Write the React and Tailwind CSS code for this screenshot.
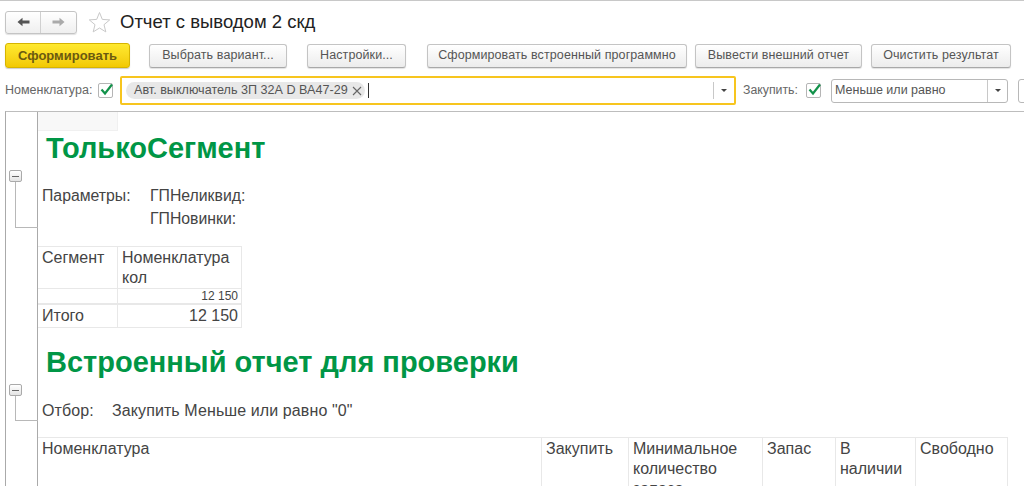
import React from "react";

function Btn({ w, ml, children }) {
  return (
    <button
      style={{ width: w, marginLeft: ml }}
      className="h-[24px] shrink-0 rounded-[3px] border border-[#c4c4c4] border-b-[#a8a8a8] bg-gradient-to-b from-white to-[#ececec] text-[12.5px] text-[#555] tracking-[0.1px] shadow-[0_1px_1px_rgba(0,0,0,0.12)] whitespace-nowrap"
    >
      {children}
    </button>
  );
}

function Check() {
  return (
    <span className="flex h-[15px] w-[15px] shrink-0 items-center justify-center rounded-[2px] border border-[#b5b5b5] bg-white">
      <svg width="15" height="15" viewBox="0 0 15 15" className="-mt-[3px] ml-[1px] overflow-visible">
        <path d="M2.5 7.5 L6 11.5 L13 2.5" fill="none" stroke="#12924a" strokeWidth="2.2" />
      </svg>
    </span>
  );
}

function Caret() {
  return <span className="h-0 w-0 border-x-[3px] border-t-[3px] border-x-transparent border-t-[#444]" />;
}

function Tree({ mt, h }) {
  return (
    <div style={{ marginTop: mt }} className="ml-[3px] flex flex-col">
      <div className="flex h-[12px] w-[13px] items-center justify-center rounded-[2px] border border-[#aaa] bg-gradient-to-b from-white to-[#e4e4e4]">
        <div className="h-px w-[7px] bg-[#666]" />
      </div>
      <div style={{ height: h }} className="ml-[6px] w-[23px] border-b border-l border-[#b8b8b8]" />
    </div>
  );
}

export default function App() {
  return (
    <div className="flex h-[486px] w-[1024px] flex-col overflow-hidden bg-white font-['Liberation_Sans',Arial,sans-serif] text-[#444]">
      <div className="h-px w-full bg-[#c8c8c8]" />
      {/* title */}
      <div className="flex h-[33px] items-center pl-[5px] pt-[9px]">
        <div className="flex h-[23px] w-[72px] items-center rounded-[3px] border border-[#c4c4c4] bg-gradient-to-b from-white to-[#efefef] shadow-[0_1px_1px_rgba(0,0,0,0.12)]">
          <div className="flex h-full w-[35px] items-center justify-center border-r border-[#d0d0d0]">
            <svg width="13" height="10" viewBox="0 0 13 10"><path d="M0.5 5 L5.5 0.8 V3.6 H12.5 V6.4 H5.5 V9.2 Z" fill="#555" /></svg>
          </div>
          <div className="flex h-full flex-1 items-center justify-center">
            <svg width="13" height="10" viewBox="0 0 13 10"><path d="M12.5 5 L7.5 0.8 V3.6 H0.5 V6.4 H7.5 V9.2 Z" fill="#aaa" /></svg>
          </div>
        </div>
        <svg width="23" height="22" viewBox="0 0 23 22" className="ml-[11px]">
          <path d="M11.5 1.5 L14.3 8.4 L21.7 8.9 L16 13.7 L17.8 20.9 L11.5 17 L5.2 20.9 L7 13.7 L1.3 8.9 L8.7 8.4 Z" fill="#fff" stroke="#c9c9c9" strokeWidth="1" />
        </svg>
        <span className="ml-[9px] text-[18.5px] text-[#222] whitespace-nowrap">Отчет с выводом 2 скд</span>
      </div>
      {/* buttons */}
      <div className="mt-[9px] flex items-center pl-[5px]">
        <button className="h-[25px] w-[125px] shrink-0 rounded-[3px] border border-[#d6b400] bg-gradient-to-b from-[#ffe92e] to-[#f2c900] text-[13px] font-bold text-[#6b5a10] shadow-[0_1px_1px_rgba(0,0,0,0.2)]">
          Сформировать
        </button>
        <Btn w={138} ml={19}>Выбрать вариант...</Btn>
        <Btn w={99} ml={20}>Настройки...</Btn>
        <Btn w={260} ml={21}>Сформировать встроенный программно</Btn>
        <Btn w={167} ml={8}>Вывести внешний отчет</Btn>
        <Btn w={140} ml={9}>Очистить результат</Btn>
      </div>
      {/* filters */}
      <div className="mt-[8px] flex items-center pl-[5px]">
        <span className="w-[93px] shrink-0 text-[12.5px] text-[#666]">Номенклатура:</span>
        <Check />
        <div className="ml-[7px] flex h-[29px] w-[616px] shrink-0 items-center rounded-[2px] border-2 border-[#f7c51e] pl-[4px]">
          <span className="flex h-[17px] items-center rounded-full bg-[#e8e8e8] pl-[8px] pr-[3px] text-[12.6px] text-[#555] whitespace-nowrap">
            Авт. выключатель 3П 32А D ВА47-29
            <svg width="10" height="10" viewBox="0 0 10 10" className="ml-[4px]"><path d="M1 1 L9 9 M9 1 L1 9" stroke="#666" strokeWidth="1.1" /></svg>
          </span>
          <span className="ml-[3px] h-[15px] w-px bg-[#333]" />
          <span className="flex-1" />
          <span className="flex h-[17px] w-[21px] items-center justify-center border-l border-[#c8c8c8]">
            <Caret />
          </span>
        </div>
        <span className="ml-[7px] w-[63px] shrink-0 text-[12.3px] text-[#666]">Закупить:</span>
        <Check />
        <div className="ml-[10px] flex h-[24px] w-[177px] shrink-0 items-center rounded-[3px] border border-[#b8b8b8] pl-[3px]">
          <span className="flex-1 text-[12.5px] text-[#555]">Меньше или равно</span>
          <span className="flex h-full w-[20px] items-center justify-center border-l border-[#c8c8c8]">
            <Caret />
          </span>
        </div>
        <div className="ml-[10px] h-[24px] w-[20px] shrink-0 rounded-l-[3px] border border-[#b8b8b8]" />
      </div>
      {/* report */}
      <div className="ml-[5px] mt-[6px] flex min-h-0 flex-1 border-l border-t border-l-[#aaa] border-t-[#bdbdbd]">
        <div className="flex w-[32px] shrink-0 flex-col border-r border-[#aaa]">
          <Tree mt={58} h={46} />
          <Tree mt={156} h={25} />
        </div>
        <div className="flex min-w-0 flex-1 flex-col">
          <div className="h-[19px] w-[80px] shrink-0 border-b border-r border-[#f0f0f0] bg-[#f8f8f8]" />
          <div className="ml-[8px] mt-[2px] h-[31px] shrink-0 text-[29px] font-bold leading-[31px] text-[#009646]">ТолькоСегмент</div>
          <div className="mt-[20px] flex h-[23px] shrink-0 pl-[4px] text-[15.8px] leading-[23px]">
            <span className="w-[108px]">Параметры:</span>
            <span>ГПНеликвид:</span>
          </div>
          <div className="ml-[112px] h-[23px] shrink-0 text-[15.8px] leading-[23px]">ГПНовинки:</div>
          <div className="mt-[16px] grid w-[204px] shrink-0 grid-cols-[80px_124px] border-t border-[#e8e8e8] text-[16px] leading-[20px]">
            <div className="h-[42px] border-b border-r border-[#e8e8e8] pl-[4px] pt-px">Сегмент</div>
            <div className="h-[42px] border-b border-r border-[#e8e8e8] pl-[4px] pt-px">Номенклатура кол</div>
            <div className="h-[16px] border-b-2 border-r border-[#e8e8e8]" />
            <div className="h-[16px] border-b-2 border-r border-[#e8e8e8] pr-[3px] text-right text-[12px] leading-[15px]">12 150</div>
            <div className="h-[23px] border-b border-r border-[#e8e8e8] pl-[4px] leading-[22px]">Итого</div>
            <div className="h-[23px] border-b border-r border-[#e8e8e8] pr-[3px] text-right leading-[22px]">12 150</div>
          </div>
          <div className="ml-[8px] mt-[19px] h-[31px] shrink-0 text-[29px] font-bold leading-[31px] text-[#009646] whitespace-nowrap">Встроенный отчет для проверки</div>
          <div className="mt-[21px] flex h-[23px] shrink-0 pl-[4px] text-[16px] leading-[23px] tracking-[0.1px]">
            <span className="w-[70px]">Отбор:</span>
            <span>Закупить Меньше или равно "0"</span>
          </div>
          <div className="mt-[15px] grid h-[70px] w-[970px] shrink-0 grid-cols-[504px_87px_134px_73px_80px_92px] border-t border-[#e8e8e8] text-[16px] leading-[20px]">
            <div className="border-r border-[#e8e8e8] pl-[4px] pt-px">Номенклатура</div>
            <div className="border-r border-[#e8e8e8] pl-[4px] pt-px">Закупить</div>
            <div className="border-r border-[#e8e8e8] pl-[4px] pt-px">Минимальное количество запаса</div>
            <div className="border-r border-[#e8e8e8] pl-[4px] pt-px">Запас</div>
            <div className="border-r border-[#e8e8e8] pl-[4px] pt-px">В наличии</div>
            <div className="border-r border-[#e8e8e8] pl-[4px] pt-px">Свободно</div>
          </div>
        </div>
      </div>
    </div>
  );
}
